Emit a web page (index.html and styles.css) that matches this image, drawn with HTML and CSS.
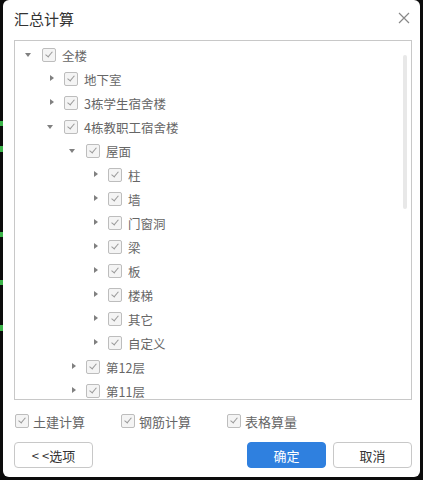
FILE: index.html
```html
<!DOCTYPE html>
<html lang="zh-CN">
<head>
  <meta charset="UTF-8" />
  <title>汇总计算</title>
  <link rel="stylesheet" href="styles.css">
</head>
<body>
  <div class="dialog">
    <div class="header">
      <span class="title">汇总计算</span>
      <svg class="close" width="12" height="12" viewBox="0 0 12 12">
        <path d="M1 1 L11 11 M11 1 L1 11" stroke="#888" stroke-width="1.2" fill="none"/>
      </svg>
    </div>

    <div class="tree">
      <div class="row lv0"><i class="arrow open"></i><span class="cb"></span><span>全楼</span></div>
      <div class="row lv1"><i class="arrow"></i><span class="cb"></span><span>地下室</span></div>
      <div class="row lv1"><i class="arrow"></i><span class="cb"></span><span>3栋学生宿舍楼</span></div>
      <div class="row lv1"><i class="arrow open"></i><span class="cb"></span><span>4栋教职工宿舍楼</span></div>
      <div class="row lv2"><i class="arrow open"></i><span class="cb"></span><span>屋面</span></div>
      <div class="row lv3"><i class="arrow"></i><span class="cb"></span><span>柱</span></div>
      <div class="row lv3"><i class="arrow"></i><span class="cb"></span><span>墙</span></div>
      <div class="row lv3"><i class="arrow"></i><span class="cb"></span><span>门窗洞</span></div>
      <div class="row lv3"><i class="arrow"></i><span class="cb"></span><span>梁</span></div>
      <div class="row lv3"><i class="arrow"></i><span class="cb"></span><span>板</span></div>
      <div class="row lv3"><i class="arrow"></i><span class="cb"></span><span>楼梯</span></div>
      <div class="row lv3"><i class="arrow"></i><span class="cb"></span><span>其它</span></div>
      <div class="row lv3"><i class="arrow"></i><span class="cb"></span><span>自定义</span></div>
      <div class="row lv2"><i class="arrow"></i><span class="cb"></span><span>第12层</span></div>
      <div class="row lv2"><i class="arrow"></i><span class="cb"></span><span>第11层</span></div>
      <div class="scrollbar"></div>
    </div>

    <div class="options">
      <label class="opt"><span class="cb"></span>土建计算</label>
      <label class="opt"><span class="cb"></span>钢筋计算</label>
      <label class="opt"><span class="cb"></span>表格算量</label>
    </div>

    <div class="buttons">
      <button class="btn">&lt; &lt;选项</button>
      <span class="spacer"></span>
      <button class="btn primary">确定</button>
      <button class="btn">取消</button>
    </div>
  </div>
</body>
</html>
```

FILE: styles.css
```css
html, body {
  margin: 0;
  padding: 0;
}

body {
  width: 423px;
  height: 480px;
  overflow: hidden;
  font-family: "Noto Sans CJK SC", "Liberation Sans", sans-serif;
  background-color: #0c0c0c;
  background-image:
    linear-gradient(#3cb44a, #3cb44a),
    linear-gradient(#3cb44a, #3cb44a),
    linear-gradient(#3cb44a, #3cb44a),
    linear-gradient(#3cb44a, #3cb44a),
    linear-gradient(#3cb44a, #3cb44a);
  background-size: 3px 5px, 3px 6px, 3px 5px, 3px 5px, 3px 6px;
  background-position: 0 121px, 0 146px, 0 232px, 0 280px, 0 325px;
  background-repeat: no-repeat;
}

.dialog {
  margin-left: 3px;
  width: 417px;
  height: 477px;
  box-sizing: border-box;
  background: #fff;
  border-radius: 6px;
  padding: 0 8px 0 11px;
  display: flex;
  flex-direction: column;
}

.header {
  height: 40px;
  display: flex;
  align-items: center;
  justify-content: space-between;
}

.title {
  font-size: 15px;
  color: #333;
  margin-top: -3px;
}

.close {
  margin-right: 2px;
  margin-top: -4px;
}

.tree {
  position: relative;
  height: 360px;
  box-sizing: border-box;
  border: 1px solid #c8c8c8;
  overflow: hidden;
  padding-top: 2px;
}

.row {
  height: 24px;
  display: flex;
  align-items: center;
  font-size: 12.5px;
  color: #666;
  white-space: nowrap;
}

.lv0 { padding-left: 8px; }
.lv1 { padding-left: 30px; }
.lv2 { padding-left: 52px; }
.lv3 { padding-left: 74px; }

.arrow {
  width: 12px;
  height: 12px;
  position: relative;
  flex: none;
}

.arrow::after {
  content: "";
  position: absolute;
  left: 5px;
  top: 2px;
  border-style: solid;
  border-width: 3.5px 0 3.5px 4px;
  border-color: transparent transparent transparent #808080;
}

.arrow.open::after {
  left: 2px;
  top: 4px;
  border-width: 4px 3.5px 0 3.5px;
  border-color: #808080 transparent transparent transparent;
}

.cb {
  width: 14px;
  height: 14px;
  box-sizing: border-box;
  border: 1px solid #bdbdbd;
  border-radius: 2px;
  background: #f4f4f4;
  position: relative;
  flex: none;
  margin-left: 7px;
  margin-right: 6px;
}

.cb::after {
  content: "";
  position: absolute;
  left: 4px;
  top: 1px;
  width: 3px;
  height: 6px;
  border: solid #999;
  border-width: 0 1.2px 1.2px 0;
  transform: rotate(40deg);
}

.scrollbar {
  position: absolute;
  left: 388px;
  top: 14px;
  width: 4px;
  height: 154px;
  border-radius: 2px;
  background: #e8e8e8;
}

.options {
  height: 20px;
  margin-top: 11px;
  padding-left: 1px;
  display: flex;
  align-items: center;
}

.opt {
  width: 106px;
  display: flex;
  align-items: center;
  font-size: 13px;
  color: #666;
}

.opt .cb {
  margin: 0 4px 0 0;
}

.buttons {
  margin-top: 11px;
  display: flex;
  align-items: center;
  gap: 7px;
}

.spacer {
  flex: 1;
}

.btn {
  width: 79px;
  height: 26px;
  box-sizing: border-box;
  border: 1px solid #c8c8c8;
  border-radius: 4px;
  background: #fff;
  color: #333;
  font-family: "Noto Sans CJK SC", "Liberation Sans", sans-serif;
  font-size: 13px;
  padding: 0;
  cursor: pointer;
}

.btn.primary {
  background: #2f80df;
  border-color: #2f80df;
  color: #fff;
}
```
